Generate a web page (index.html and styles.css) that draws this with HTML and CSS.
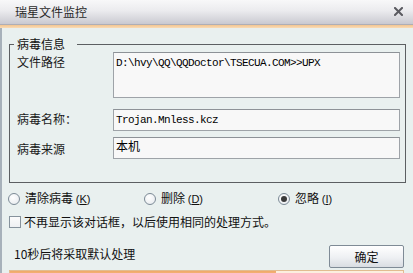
FILE: index.html
```html
<!DOCTYPE html>
<html lang="zh">
<head>
<meta charset="utf-8">
<title>瑞星文件监控</title>
<link rel="stylesheet" href="styles.css">
</head>
<body>
<div class="window">
  <div class="titlebar">
    <span class="title">瑞星文件监控</span>
    <svg class="close" width="9" height="9" viewBox="0 0 9 9"><path d="M1 1 L8 8 M8 1 L1 8" stroke="#5a5a60" stroke-width="2" stroke-linecap="square"/></svg>
  </div>
  <div class="accent"></div>
  <div class="content">
    <fieldset class="group">
      <legend class="legend">病毒信息</legend>
      <div class="row row-path">
        <div class="label">文件路径</div>
        <div class="box box-tall mono">D:\hvy\QQ\QQDoctor\TSECUA.COM&gt;&gt;UPX</div>
      </div>
      <div class="row row-name">
        <div class="label">病毒名称：</div>
        <div class="box mono">Trojan.Mnless.kcz</div>
      </div>
      <div class="row row-src">
        <div class="label label-low">病毒来源</div>
        <div class="box cjk">本机</div>
      </div>
    </fieldset>
    <div class="options">
      <div class="opt"><span class="radio"></span><span>清除病毒 <span class="mn">(<u>K</u>)</span></span></div>
      <div class="opt"><span class="radio"></span><span>删除 <span class="mn">(<u>D</u>)</span></span></div>
      <div class="opt"><span class="radio checked"></span><span>忽略 <span class="mn">(<u>I</u>)</span></span></div>
    </div>
    <div class="check"><span class="checkbox"></span><span>不再显示该对话框，以后使用相同的处理方式。</span></div>
    <div class="footer">
      <span class="countdown">10秒后将采取默认处理</span>
      <button class="btn">确定</button>
    </div>
    <div class="progress"><div class="fill" style="width:266px"></div></div>
  </div>
</div>
</body>
</html>
```
FILE: styles.css
```css
html, body {
  margin: 0;
  padding: 0;
  width: 413px;
  height: 273px;
  overflow: hidden;
  background: #e9f0ef;
}
body {
  font-family: "Noto Sans CJK SC", "Noto Sans", sans-serif;
  font-size: 12px;
  line-height: 14px;
  color: #111;
}
.window {
  width: 413px;
  height: 273px;
  display: flex;
  flex-direction: column;
}
.titlebar {
  height: 24px;
  border-bottom: 1px solid #aeaeb6;
  background: linear-gradient(#f8f8f9, #ebebee 45%, #d9d9de 75%, #c9c9d1);
  display: flex;
  align-items: center;
  justify-content: space-between;
  padding: 0 10px 0 15px;
  flex: none;
}
.title {
  font-size: 12px;
  color: #2a2a2a;
  line-height: 14px;
  margin-top: -1px;
}
.close {
  display: block;
  margin-top: -2px;
}
.accent {
  height: 3px;
  background: linear-gradient(#f3c58f, #f9dcb8);
  flex: none;
}
.content {
  flex: 1;
  border-left: 2px solid #a7b1ba;
  padding: 0 7px 0 7px;
  display: flex;
  flex-direction: column;
}
.group {
  margin: 9px 0 0 0;
  border: 1px solid #5c5f62;
  padding: 1px 4px 23px 7px;
  min-width: 0;
}
.legend {
  padding: 0 12px 0 3px;
  margin-left: -3px;
  line-height: 14px;
  font-size: 12px;
}
.row {
  display: grid;
  grid-template-columns: 96px 287px;
}
.row-name { margin-top: 11px; }
.row-src { margin-top: 6px; }
.label {
  padding-top: 3px;
  color: #1a1a1a;
}
.label-low { padding-top: 5px; }
.box {
  box-sizing: border-box;
  height: 22px;
  border: 1px solid #9ea3a8;
  border-top-color: #8d9297;
  background: #f8f8f8;
  padding: 3px 2px 0 2px;
  white-space: nowrap;
  overflow: hidden;
}
.box-tall { height: 46px; }
.mono {
  font-family: "Liberation Mono", monospace;
  font-size: 11px;
  letter-spacing: -0.6px;
  line-height: 14px;
  color: #000;
}
.cjk {
  padding-top: 1px;
  color: #000;
}
.options {
  margin: 8px 0 0 -1px;
  display: grid;
  grid-template-columns: 136px 134px auto;
}
.opt {
  display: flex;
  align-items: center;
  gap: 5px;
}
.mn {
  font-family: "Liberation Sans", sans-serif;
  font-size: 11px;
}
.radio {
  box-sizing: border-box;
  width: 12px;
  height: 12px;
  border-radius: 50%;
  border: 1px solid #7c8a96;
  background: radial-gradient(circle at 40% 35%, #ffffff, #e4e8ec);
  position: relative;
  flex: none;
}
.radio.checked::after {
  content: "";
  position: absolute;
  left: 2px;
  top: 2px;
  width: 6px;
  height: 6px;
  border-radius: 50%;
  background: #3a3a3a;
}
.check {
  margin-top: 9px;
  display: flex;
  align-items: center;
  gap: 3px;
}
.checkbox {
  box-sizing: border-box;
  width: 12px;
  height: 12px;
  border: 1px solid #86929c;
  background: linear-gradient(#fbfbfb, #eef0f2);
  flex: none;
}
.footer {
  margin-top: 16px;
  display: flex;
  justify-content: space-between;
  align-items: flex-start;
  padding: 0 2px 0 5px;
}
.countdown {
  padding-top: 2px;
}
.btn {
  box-sizing: border-box;
  width: 75px;
  height: 23px;
  border: 1px solid #7f8b96;
  border-radius: 2px;
  background: linear-gradient(#ffffff, #eef0f3 55%, #d9dde2);
  font-family: "Noto Sans CJK SC", sans-serif;
  font-size: 12px;
  line-height: 14px;
  color: #111;
  padding: 0;
}
.progress {
  margin: 2px 2px 0 0;
  height: 6px;
  border: 1px solid #e2bc90;
  background: #fcefdf;
  flex: none;
}
.fill {
  height: 100%;
  background: linear-gradient(#f0a868, #f6c08c);
}
```
